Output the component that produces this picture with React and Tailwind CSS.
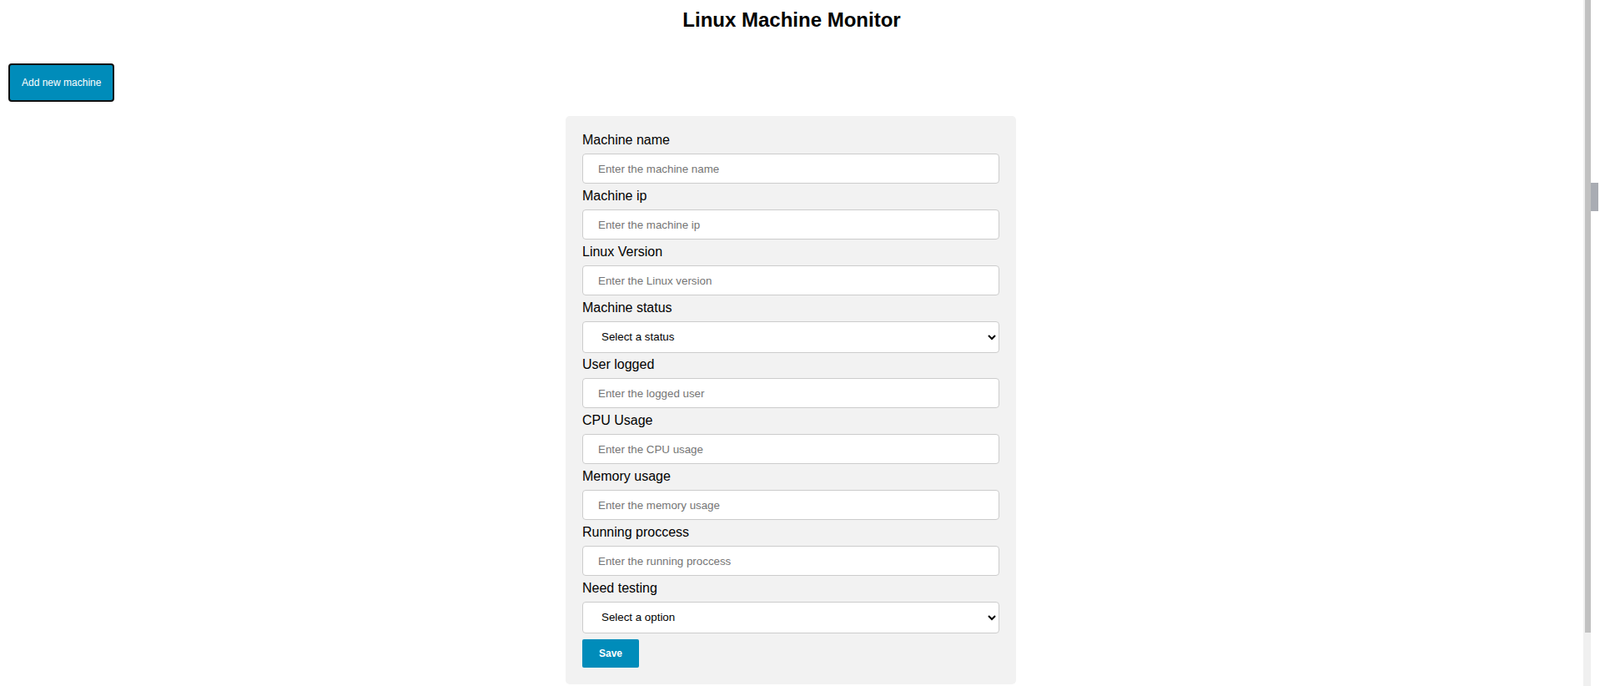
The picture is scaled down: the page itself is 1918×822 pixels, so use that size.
import { useState } from 'react';

const FIELDS = [
  { label: 'Machine name', placeholder: 'Enter the machine name' },
  { label: 'Machine ip', placeholder: 'Enter the machine ip' },
  { label: 'Linux Version', placeholder: 'Enter the Linux version' },
  { label: 'Machine status', select: 'Select a status', options: ['Online', 'Offline'] },
  { label: 'User logged', placeholder: 'Enter the logged user' },
  { label: 'CPU Usage', placeholder: 'Enter the CPU usage' },
  { label: 'Memory usage', placeholder: 'Enter the memory usage' },
  { label: 'Running proccess', placeholder: 'Enter the running proccess' },
  { label: 'Need testing', select: 'Select a option', options: ['Yes', 'No'] },
];

function Field({ field, value, onChange }) {
  return (
    <div>
      <label className="block text-[16px] leading-[18px] text-black">{field.label}</label>
      {field.select ? (
        <select
          value={value}
          onChange={(e) => onChange(e.target.value)}
          className="mb-[5.5px] mt-[6.5px] block h-[38px] w-full rounded-[4px] border border-[#cccccc] bg-white pl-[18px] pr-[6px] text-[13.33px] text-black outline-none"
        >
          <option value="">{field.select}</option>
          {field.options.map((o) => (
            <option key={o} value={o}>
              {o}
            </option>
          ))}
        </select>
      ) : (
        <input
          value={value}
          onChange={(e) => onChange(e.target.value)}
          placeholder={field.placeholder}
          className="mb-[6px] mt-[7px] block h-[36px] w-full rounded-[4px] border border-[#cccccc] bg-white px-[18px] text-[13.33px] text-black outline-none placeholder:text-[#757575]"
        />
      )}
    </div>
  );
}

export default function App() {
  const [form, setForm] = useState({});

  return (
    <div className="flex min-h-[822px] bg-white font-['Liberation_Sans',Arial,sans-serif] text-black">
      <main className="flex-1">
        <h1 className="pt-[10px] text-center text-[24px] font-bold leading-[28px]">Linux Machine Monitor</h1>
        <button
          type="button"
          className="ml-[10px] mt-[38px] rounded-[4px] border-2 border-[#111111] bg-[#008cba] px-[14px] py-[14px] text-[12px] leading-[14px] text-white"
        >
          Add new machine
        </button>
        <form
          onSubmit={(e) => e.preventDefault()}
          className="ml-[678px] mt-[17px] w-[540px] rounded-[5px] bg-[#f2f2f2] px-[20px] pb-[20px] pt-[20px]"
        >
          {FIELDS.map((f, i) => (
            <Field
              key={f.label}
              field={f}
              value={form[i] || ''}
              onChange={(v) => setForm({ ...form, [i]: v })}
            />
          ))}
          <button
            type="submit"
            className="mt-[7px] block h-[34px] rounded-[2px] bg-[#008cba] px-[20px] text-[12px] font-bold leading-[14px] text-white"
          >
            Save
          </button>
        </form>
      </main>
      <aside className="flex w-[20px] shrink-0">
        <div className="w-[2px] bg-[#f0f0f0]" />
        <div className="flex w-[7px] flex-col">
          <div className="h-[758px] bg-[#c1c1c1]" />
          <div className="flex-1 bg-[#f0f0f0]" />
        </div>
        <div className="flex-1">
          <div className="mt-[219px] h-[34px] w-[9px] bg-[#a9acb3]" />
        </div>
      </aside>
    </div>
  );
}
